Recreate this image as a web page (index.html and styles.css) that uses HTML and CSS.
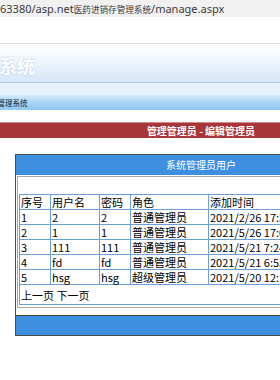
FILE: index.html
```html
<!DOCTYPE html>
<html lang="zh-CN">
<head>
  <meta charset="UTF-8">
  <title>管理管理员 - 编辑管理员</title>
  <link rel="stylesheet" href="styles.css">
</head>
<body>
  <div class="addr">63380/asp.net<span class="addr-cjk">医药进销存管理系统</span>/manage.aspx</div>
  <div class="blank"></div>

  <div class="page">
    <div class="banner">
      <h1>医药进销存管理系统</h1>
    </div>
    <div class="strip"></div>
    <div class="navbar"><span class="nav-title">医药进销存管理系统</span></div>

    <div class="titlebar">管理管理员 - 编辑管理员</div>

    <div class="box">
      <div class="box-head">系统管理员用户</div>
      <div class="box-body">
        <table class="grid">
          <thead>
            <tr>
              <th>序号</th>
              <th>用户名</th>
              <th>密码</th>
              <th>角色</th>
              <th>添加时间</th>
            </tr>
          </thead>
          <tbody>
            <tr><td>1</td><td>2</td><td>2</td><td>普通管理员</td><td>2021/2/26 17:35:12</td></tr>
            <tr><td>2</td><td>1</td><td>1</td><td>普通管理员</td><td>2021/5/26 17:02:41</td></tr>
            <tr><td>3</td><td>111</td><td>111</td><td>普通管理员</td><td>2021/5/21 7:24:09</td></tr>
            <tr><td>4</td><td>fd</td><td>fd</td><td>普通管理员</td><td>2021/5/21 6:55:30</td></tr>
            <tr><td>5</td><td>hsg</td><td>hsg</td><td>超级管理员</td><td>2021/5/20 12:10:48</td></tr>
          </tbody>
          <tfoot>
            <tr><td colspan="5" class="pager">上一页 下一页</td></tr>
          </tfoot>
        </table>
      </div>
      <div class="box-foot"></div>
    </div>
  </div>
</body>
</html>
```

FILE: styles.css
```css
html, body {
  margin: 0;
  padding: 0;
  overflow: hidden;
  background: #fff;
}

body {
  font-family: "Noto Sans CJK SC", "Noto Sans", sans-serif;
  color: #000;
}

.addr {
  height: 17px;
  line-height: 17px;
  background: #f1f1f1;
  color: #3c3c3c;
  font-family: "Noto Sans", "Noto Sans CJK SC", sans-serif;
  font-size: 11px;
  white-space: nowrap;
}

.addr-cjk {
  font-family: "Noto Sans CJK SC", sans-serif;
  font-size: 8.6px;
}

.blank {
  height: 26px;
  border-bottom: 1px solid #dfe3e8;
}

.page {
  width: 402px;
}

.banner {
  height: 38px;
  background: linear-gradient(#ffffff, #f0f6fd 40%, #d5e6f7);
  border-bottom: 1px solid #b3cbe4;
  overflow: hidden;
}

.banner h1 {
  margin: 0 0 0 -127px;
  padding-top: 10px;
  font-size: 18px;
  line-height: 22px;
  font-weight: bold;
  color: #fff;
  white-space: nowrap;
  text-shadow: 0 0 2px #a9c6e4;
}

.strip {
  height: 12px;
  background: #e7f1fb;
}

.navbar {
  height: 15px;
  background: linear-gradient(#d3eafb, #a9d5f4 50%, #92c7ef);
  overflow: hidden;
}

.nav-title {
  display: block;
  margin-left: -40px;
  font-size: 7.5px;
  line-height: 15px;
  color: #1a1a1a;
  white-space: nowrap;
}

.titlebar {
  margin-top: 12px;
  height: 15px;
  line-height: 15px;
  background: #a7353a;
  border-top: 1px solid #d08a8c;
  color: #fff;
  font-size: 10px;
  font-weight: bold;
  text-align: center;
}

.box {
  margin: 16px 0 0 15px;
  width: 372px;
  border: 1px solid #4b4b4b;
  box-sizing: border-box;
}

.box-head {
  height: 20px;
  line-height: 20px;
  background: #3e8fe0;
  color: #fff;
  font-size: 10px;
  text-align: center;
}

.box-body {
  margin: 1px 1px 0;
  border: 1px solid #a6a6a6;
  padding: 17px 1px 2px;
}

.grid {
  width: 100%;
  border-collapse: collapse;
  border: 1px solid #6a9fd8;
  font-size: 11px;
}

.grid th,
.grid td {
  border: 1px solid #6a9fd8;
  padding: 0 1px;
  line-height: 14px;
  text-align: left;
  font-weight: normal;
  white-space: nowrap;
}

.grid th:nth-child(1) { width: 28px; }
.grid th:nth-child(2) { width: 46px; }
.grid th:nth-child(3) { width: 28px; }
.grid th:nth-child(4) { width: 75px; }

.grid .pager {
  padding: 3px 1px 2px;
  line-height: 14px;
  font-size: 11px;
}

.box-foot {
  margin-top: 7px;
  height: 19px;
  background: #3e8fe0;
  border-top: 1px solid #454545;
}
```
